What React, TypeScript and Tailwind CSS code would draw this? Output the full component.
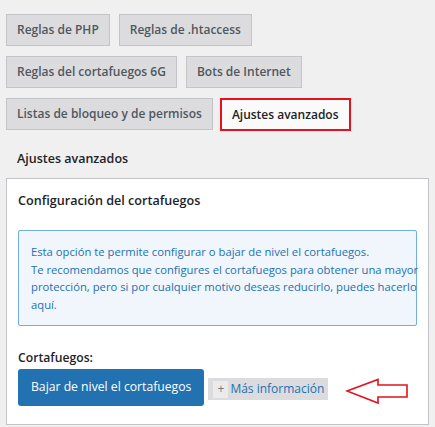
import React from "react";

const tabs = [
  ["Reglas de PHP", "Reglas de .htaccess"],
  ["Reglas del cortafuegos 6G", "Bots de Internet"],
];

const Tab = ({ label }: { label: string }) => (
  <button className="h-[32px] px-[10px] border border-[#c3c4c7] bg-[#dcdcde] text-[#50575e] text-[12px] font-semibold leading-none whitespace-nowrap">
    {label}
  </button>
);

const App = () => {
  return (
    <div
      className="w-[435px] h-[427px] overflow-hidden bg-[#f0f0f1] px-[6px] pt-[14px]"
      style={{ fontFamily: '"Open Sans", "Noto Sans", sans-serif' }}
    >
      <div className="flex flex-col gap-[10px]">
        {tabs.map((row, i) => (
          <div key={i} className="flex gap-[9px]">
            {row.map((t) => (
              <Tab key={t} label={t} />
            ))}
          </div>
        ))}
        <div className="flex gap-[7px]">
          <Tab label="Listas de bloqueo y de permisos" />
          <button className="h-[33px] px-[10px] border-2 border-[#e3121d] bg-[#fafafa] text-[#1d2327] text-[12px] font-semibold leading-none whitespace-nowrap">
            Ajustes avanzados
          </button>
        </div>
      </div>

      <h2 className="mt-[18px] ml-[11px] text-[12.5px] font-semibold text-[#1d2327] leading-[20px]">
        Ajustes avanzados
      </h2>

      <div className="mt-[9px] bg-white border border-[#c3c4c7] px-[11px] pt-[12px] pb-[18px]">
        <h3 className="text-[12.6px] font-semibold text-[#1d2327] leading-[20px]">
          Configuración del cortafuegos
        </h3>

        <div className="mt-[19px] border border-[#72aee6] rounded-[2px] bg-[#f0f6fc] px-[12px] py-[12px] text-[11.25px] leading-[17.5px] text-[#2271b1]">
          <p className="whitespace-nowrap">
            Esta opción te permite configurar o bajar de nivel el cortafuegos.
          </p>
          <p className="whitespace-nowrap">
            Te recomendamos que configures el cortafuegos para obtener una mayor
          </p>
          <p className="whitespace-nowrap">
            protección, pero si por cualquier motivo deseas reducirlo, puedes hacerlo
          </p>
          <p>aquí.</p>
        </div>

        <p className="mt-[23px] text-[12.2px] font-semibold text-[#1d2327] leading-[18px]">
          Cortafuegos:
        </p>

        <div className="mt-[2px] flex items-center">
          <button className="h-[37px] px-[13px] rounded-[3px] bg-[#2271b1] text-white text-[12.2px] leading-none whitespace-nowrap">
            Bajar de nivel el cortafuegos
          </button>
          <span className="ml-[4px] mt-[3px] h-[22px] flex items-center bg-[#dcdcde] pl-[5px] pr-[4px] text-[12px] text-[#2271b1] whitespace-nowrap">
            <span className="h-[17px] w-[15px] flex items-center justify-center bg-[#ebebec] text-[#787c82] text-[12px] leading-none mr-[2px]">
              +
            </span>
            Más información
          </span>
          <svg
            className="ml-[17px] mt-[9px]"
            width="64"
            height="28"
            viewBox="0 0 64 28"
          >
            <path
              d="M2 13 L33 1.5 L33 7 L62 7 L62 19 L33 19 L33 25 Z"
              fill="none"
              stroke="#e3121d"
              strokeWidth="1.6"
              strokeLinejoin="miter"
            />
          </svg>
        </div>
      </div>
    </div>
  );
};

export default App;
